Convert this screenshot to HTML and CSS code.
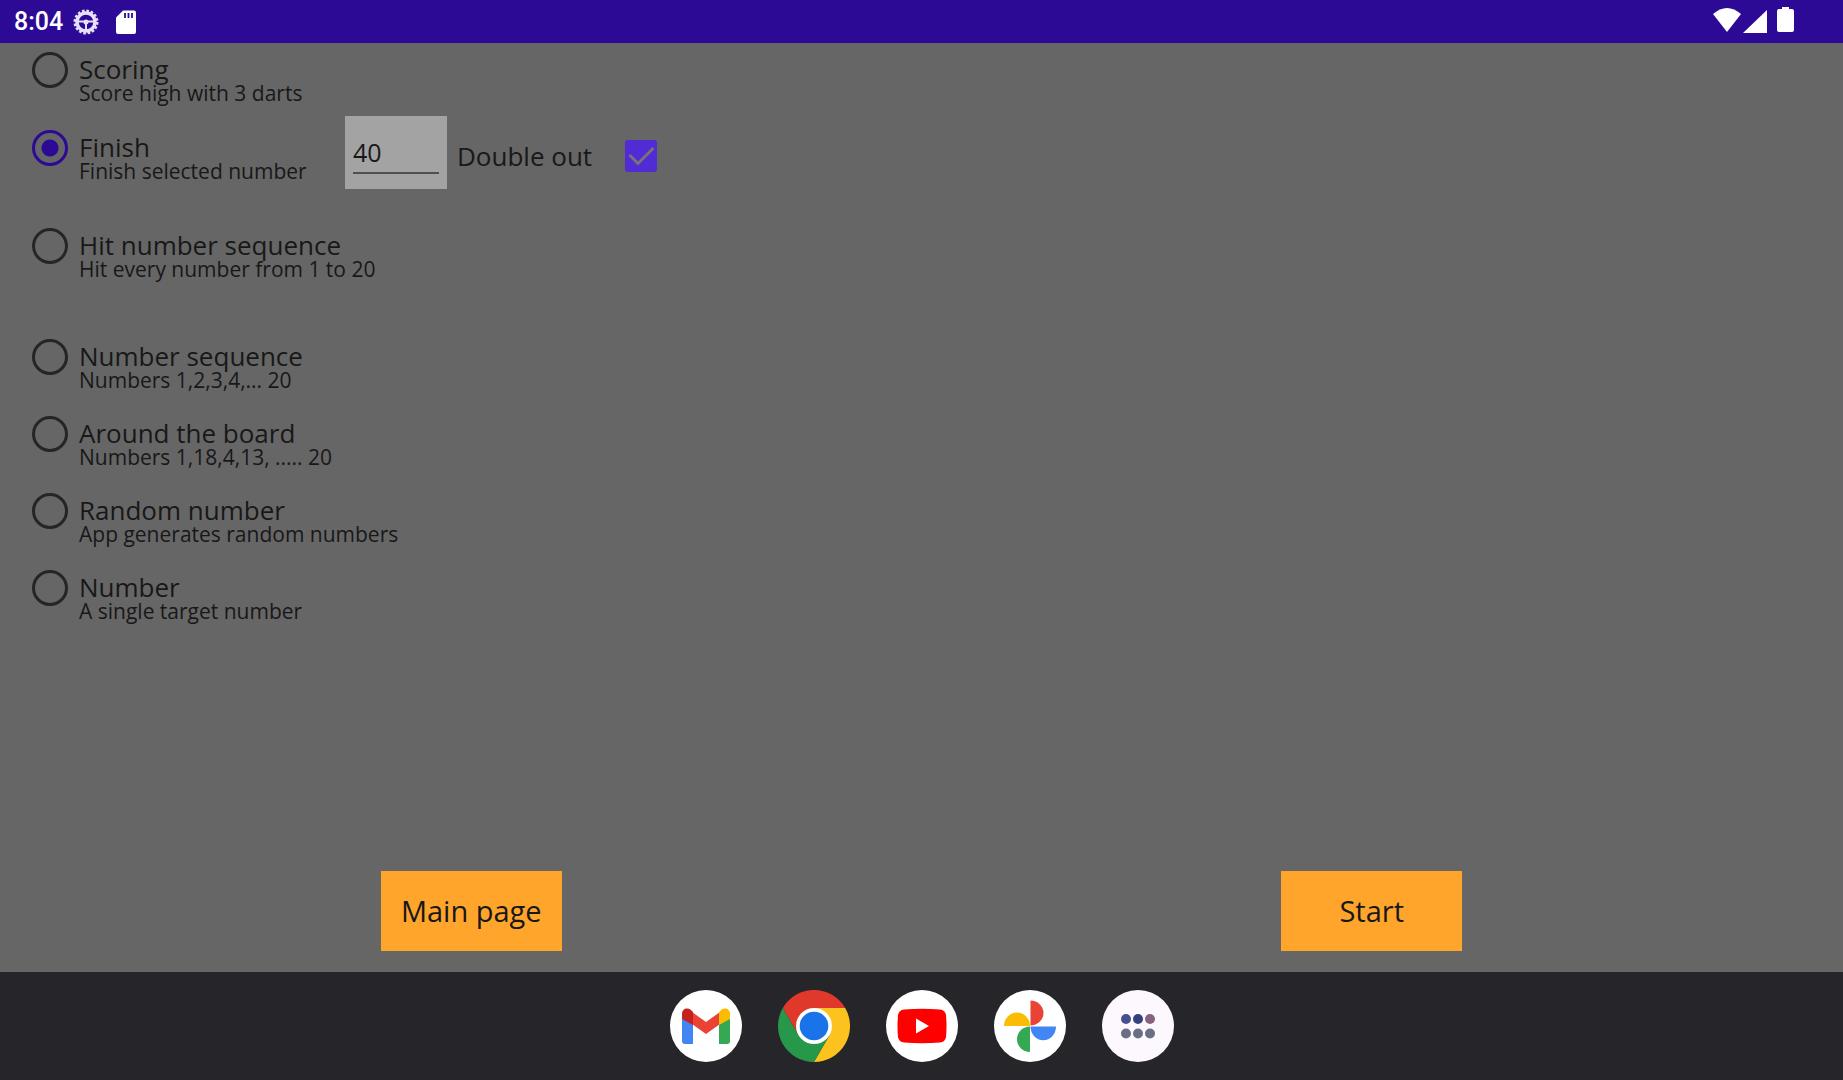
FILE: index.html
```html
<!DOCTYPE html>
<html lang="en">
<head>
<meta charset="utf-8">
<meta name="viewport" content="width=device-width, initial-scale=1">
<title>Darts training</title>
<link rel="stylesheet" href="styles.css">
</head>
<body>
<header class="status">
  <div class="status-group">
    <time class="clock">8:04</time>
    <svg class="status-gear" width="28" height="28" viewBox="0 0 28 28" fill="none" stroke="#e6e0fa">
      <circle cx="14" cy="14" r="11" stroke-width="3" stroke-dasharray="2.6 1.72"/>
      <circle cx="14" cy="14" r="9" stroke-width="3.500"/>
      <path d="M5 13.500h18M14 14v9" stroke-width="2"/>
      <circle cx="14" cy="14" r="1.500" stroke-width="2"/>
    </svg>
    <svg width="20" height="24" viewBox="0 0 20 24">
      <path d="M7 0.500h11a2 2 0 0 1 2 2V22a2 2 0 0 1-2 2H2a2 2 0 0 1-2-2V7.500z" fill="#fff"/>
      <path d="M9 3v5M12.500 3v5M16 3v5" stroke="#2c0a96" stroke-width="1.800"/>
    </svg>
  </div>
  <div class="status-group status-signals">
    <svg width="28" height="26" viewBox="0 0 28 26"><path d="M0 7Q14-5 28 7L14 25z" fill="#fff"/></svg>
    <svg width="24" height="26" viewBox="0 0 24 26"><path d="M24 3v23H0z" fill="#fff"/></svg>
    <svg class="battery" width="17" height="26" viewBox="0 0 17 26"><path d="M5 0h7v2h3a2 2 0 0 1 2 2v19a2 2 0 0 1-2 2H2a2 2 0 0 1-2-2V4a2 2 0 0 1 2-2h3z" fill="#fff"/></svg>
  </div>
</header>
<main class="page">
  <form class="form">
    <div class="options">
      <div class="option option-first">
        <label class="choice"><input class="radio" type="radio" name="mode"><span class="text"><span class="title">Scoring</span><span class="note">Score high with 3 darts</span></span></label>
      </div>
      <div class="option option-fields">
        <label class="choice"><input class="radio" type="radio" name="mode" checked><span class="text"><span class="title">Finish</span><span class="note">Finish selected number</span></span></label>
        <div class="number-box"><input class="number" type="text" inputmode="numeric" value="40" aria-label="Finish number"></div>
        <label class="double"><span>Double out</span>
          <span class="tick"><input class="checkbox" type="checkbox" checked>
          <svg class="tick-mark" width="32" height="32" viewBox="0 0 32 32" fill="none" stroke="#777379" stroke-width="3"><path d="M4.500 15L13 23.500L28.500 8"/></svg></span>
        </label>
      </div>
      <div class="option option-hit">
        <label class="choice"><input class="radio" type="radio" name="mode"><span class="text"><span class="title">Hit number sequence</span><span class="note">Hit every number from 1 to 20</span></span></label>
      </div>
      <div class="option">
        <label class="choice"><input class="radio" type="radio" name="mode"><span class="text"><span class="title">Number sequence</span><span class="note">Numbers 1,2,3,4,... 20</span></span></label>
      </div>
      <div class="option">
        <label class="choice"><input class="radio" type="radio" name="mode"><span class="text"><span class="title">Around the board</span><span class="note">Numbers 1,18,4,13, ..... 20</span></span></label>
      </div>
      <div class="option">
        <label class="choice"><input class="radio" type="radio" name="mode"><span class="text"><span class="title">Random number</span><span class="note">App generates random numbers</span></span></label>
      </div>
      <div class="option">
        <label class="choice"><input class="radio" type="radio" name="mode"><span class="text"><span class="title">Number</span><span class="note">A single target number</span></span></label>
      </div>
    </div>
    <div class="actions">
      <button class="action" type="button">Main page</button>
      <button class="action" type="button">Start</button>
    </div>
  </form>
</main>
<nav class="dock" aria-label="Apps">
  <button class="app" type="button" aria-label="Gmail">
    <svg viewBox="0 0 72 72">
      <circle cx="36" cy="36" r="36" fill="#fff"/>
      <path d="M12 26l11 8v20h-8a3 3 0 0 1-3-3z" fill="#4285f4"/>
      <path d="M60 26l-11 8v20h8a3 3 0 0 0 3-3z" fill="#34a853"/>
      <path d="M22 22l14 10 14-10v12L36 44 22 34z" fill="#ea4335"/>
      <path d="M12 29v-5c0-5 5-7 9-4l2 2v13z" fill="#c5221f"/>
      <path d="M60 29v-5c0-5-5-7-9-4l-2 2v13z" fill="#fbbc04"/>
    </svg>
  </button>
  <button class="app" type="button" aria-label="Chrome">
    <svg viewBox="0 0 72 72">
      <path d="M36 36V18H67.200A36 36 0 0 1 36 72L51.600 45z" fill="#fcc31e"/>
      <path d="M36 36L20.400 45L4.800 18A36 36 0 0 1 67.200 18H36z" fill="#e0392c"/>
      <path d="M4.800 18A36 36 0 0 0 36 72L51.600 45L36 36L20.400 45z" fill="#27984a"/>
      <circle cx="36" cy="36" r="18" fill="#fff"/>
      <circle cx="36" cy="36" r="14.300" fill="#1a73e8"/>
    </svg>
  </button>
  <button class="app" type="button" aria-label="YouTube">
    <svg viewBox="0 0 72 72">
      <circle cx="36" cy="36" r="36" fill="#fff"/>
      <path d="M18 19.500Q36 18 54 19.500Q59 20 60 25Q61 36 60 47Q59 52 54 52.500Q36 54 18 52.500Q13 52 12 47Q11 36 12 25Q13 20 18 19.500z" fill="#f00"/>
      <path d="M30 28.500v15L43 36z" fill="#fff"/>
    </svg>
  </button>
  <button class="app" type="button" aria-label="Photos">
    <svg viewBox="0 0 72 72">
      <circle cx="36" cy="36" r="36" fill="#fff"/>
      <path d="M36.500 36V10.500a13 12.500 0 0 1 0 25z" fill="#ea4335"/>
      <path d="M36.500 36.500H62a12.500 13.500 0 0 1-25.500 0z" fill="#4285f4"/>
      <path d="M36 36.500V62a13 12.750 0 0 1 0-25.500z" fill="#34a853"/>
      <path d="M36 36H10a13 13.500 0 0 1 26 0z" fill="#fbbc04"/>
    </svg>
  </button>
  <button class="app" type="button" aria-label="All apps">
    <svg viewBox="0 0 72 72">
      <circle cx="36" cy="36" r="36" fill="#fcf8fd"/>
      <circle cx="24" cy="29" r="5" fill="#46508c"/><circle cx="36" cy="29" r="5" fill="#35407f"/><circle cx="48" cy="29" r="5" fill="#89617f"/>
      <circle cx="24" cy="43.500" r="5" fill="#6b6f85"/><circle cx="36" cy="43.500" r="5" fill="#6b6f85"/><circle cx="48" cy="43.500" r="5" fill="#6b6f85"/>
    </svg>
  </button>
</nav>
</body>
</html>
```
FILE: styles.css
```css
* { box-sizing: border-box; }
body {
  margin: 0;
  min-height: 100vh;
  display: flex;
  flex-direction: column;
  background: #666;
  color: #181818;
  font-family: "Open Sans", sans-serif;
}
svg { display: block; }
.status {
  height: 43px;
  padding: 0 49px 0 14px;
  display: flex;
  justify-content: space-between;
  align-items: center;
  background: #2c0a96;
  color: #fff;
}
.status-group { display: flex; align-items: center; }
.status-signals { gap: 2px; padding-bottom: 4px; }
.clock { font: 500 25px/28px Roboto, sans-serif; }
.status-gear { margin: 0 16px 0 9px; }
.battery { margin-left: 8px; }
.page, .form { flex: 1; display: flex; flex-direction: column; }
.options { padding-left: 32px; }
.option { display: flex; align-items: flex-start; min-height: 77px; padding-top: 9px; }
.option-first { min-height: 73px; }
.option-fields { min-height: 103px; padding-top: 0; }
.option-fields .choice { width: 313px; padding-top: 14px; }
.option-hit { min-height: 111px; }
.choice { display: flex; align-items: flex-start; gap: 11px; }
.radio {
  appearance: none;
  width: 36px;
  height: 36px;
  margin: 0;
  border: 3px solid #252525;
  border-radius: 50%;
}
.radio:checked {
  border-color: #2c0a96;
  background: radial-gradient(circle, #2c0a96 8px, transparent 9px);
}
.text { display: flex; flex-direction: column; padding-top: 5px; white-space: nowrap; }
.title { font-size: 26px; line-height: 24px; }
.note { font-size: 21px; line-height: 24px; }
.number-box { width: 102px; height: 73px; padding: 16px 8px; background: #a3a3a3; }
.number {
  width: 100%;
  height: 42px;
  padding: 0;
  border: 0;
  border-bottom: 2px solid #505050;
  background: none;
  color: inherit;
  font: 25px/36px "Open Sans", sans-serif;
}
.double { display: flex; align-items: center; gap: 33px; height: 80px; margin-left: 10px; font-size: 26px; }
.tick { position: relative; }
.checkbox {
  display: block;
  appearance: none;
  width: 32px;
  height: 32px;
  margin: 0;
  border-radius: 3px;
  background: #512bd4;
}
.tick-mark { position: absolute; inset: 0; pointer-events: none; }
.actions {
  display: grid;
  grid-template-columns: 1fr 1fr;
  justify-items: center;
  margin-top: auto;
  padding: 21px;
}
.action {
  width: 181px;
  height: 80px;
  padding: 0;
  border: 0;
  background: #ffa52c;
  color: #181818;
  font: 29px/40px "Open Sans", sans-serif;
}
.dock {
  display: flex;
  justify-content: center;
  align-items: center;
  gap: 36px;
  height: 108px;
  background: #26262a;
}
.app { width: 72px; height: 72px; padding: 0; border: 0; border-radius: 50%; background: none; }
```
